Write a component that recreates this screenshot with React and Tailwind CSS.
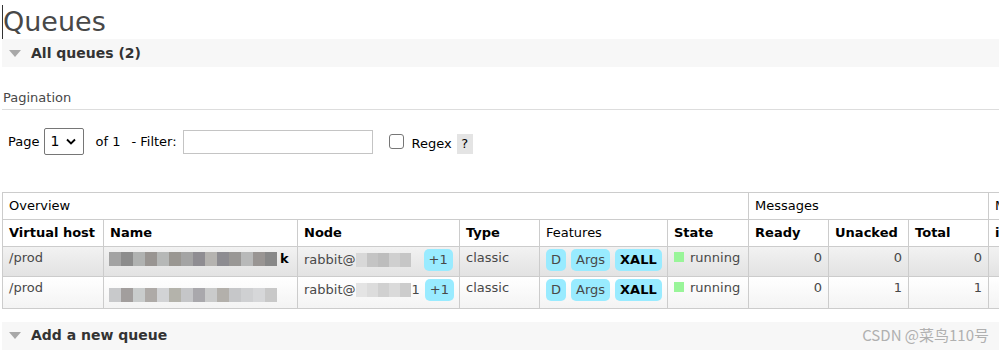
import React from 'react';

const font = { fontFamily: '"DejaVu Sans", Verdana, sans-serif' };

const Mosaic = ({ shades, w = 12, className = '' }) => (
    <span className={`inline-flex align-middle ${className}`}>
        {shades.map((c, i) => (
            <span key={i} className="inline-block h-[14px]" style={{ background: c, width: w }} />
        ))}
    </span>
);

const Badge = ({ children, bold }) => (
    <span className={`inline-block whitespace-nowrap rounded-[5px] bg-[#99ebff] px-[5px] leading-[22px] ${bold ? 'font-bold text-black' : 'text-[#484848]'}`}>
        {children}
    </span>
);

const rows = [
    {
        bg: 'bg-linear-to-b from-[#f2f2f2] to-[#e2e2e2]',
        name: ['#a3a3a3', '#8c8c8c', '#b0b2b1', '#999592', '#b6b8b7', '#9a9792', '#a4a4a4', '#8f8d92', '#b5b3b0', '#8d8c91', '#999795', '#b8b9b9', '#999593', '#888888'],
        tail: 'k',
        node: ['#d8d8d8', '#c4c4c4', '#bdbdbd', '#cfcfcf', '#c6c6c6'],
        nodeTail: '',
        ready: 0, unacked: 0, total: 0,
    },
    {
        bg: 'bg-linear-to-b from-[#ffffff] to-[#f3f3f3]',
        name: ['#c8c9cb', '#a29e9d', '#c9cccc', '#aeaaa7', '#d2d3d5', '#b4b3ab', '#c5c6c8', '#a9a8ac', '#cacbcb', '#b3b0ab', '#c6c7c9', '#cfd0d2', '#d6d7d9', '#c8c8c8'],
        tail: '',
        node: ['#e4e4e4', '#dcdcdc', '#d0d0d0', '#dadada', '#cccccc'],
        nodeTail: '1',
        ready: 0, unacked: 1, total: 1,
    },
];

const SectionBar = ({ title, children }) => (
    <div className="ml-[2px] h-[28px] bg-[#f7f7f7] flex items-center">
        <span className="ml-[7px] w-0 h-0 border-l-[6px] border-r-[6px] border-t-[7px] border-l-transparent border-r-transparent border-t-[#a8a8a8]" />
        <span className="ml-[10px] text-[14px] font-bold text-[#333]">{title}</span>
        {children}
    </div>
);

const App = () => {
    return (
        <div className="w-[999px] h-[351px] overflow-hidden bg-white text-[#484848]" style={font}>
            {/* Title */}
            <h1 className="ml-[2px] mt-[5px] h-[34px] border-l border-[#333] pl-[0px] text-[27px] leading-[34px] text-[#484848]">Queues</h1>

            <SectionBar title="All queues (2)" />

            {/* Pagination */}
            <div className="mt-[18px] ml-[2px] border-b border-[#ddd]">
                <span className="ml-[1px] text-[13px] leading-[17px] text-[#484848]">Pagination</span>
            </div>

            <div className="mt-[18px] ml-[8px] flex items-center h-[27px] text-[13px] text-black">
                <span>Page</span>
                <span className="ml-[5px] w-[40px] h-[27px] border border-[#767676] rounded-[2px] flex items-center justify-between px-[5px]">
                    <span className="text-[14px]">1</span>
                    <svg width="10" height="7" viewBox="0 0 10 7" className="mr-[2px]">
                        <path d="M1 1.5l4 4 4-4" fill="none" stroke="#000" strokeWidth="1.8" />
                    </svg>
                </span>
                <span className="ml-[11px]">of 1</span>
                <span className="ml-[11px]">- Filter:</span>
                <span className="ml-[6px] w-[190px] h-[24px] border border-[#c4c4c4] bg-white" />
                <span className="ml-[16px] w-[15px] h-[15px] border border-[#767676] rounded-[3px] bg-white" />
                <span className="ml-[8px] mt-[4px]">Regex</span>
                <span className="ml-[5px] mt-[4px] w-[16px] h-[20px] bg-[#e4e4e4] flex items-center justify-center text-[13px]">?</span>
            </div>

            {/* Table */}
            <div className="mt-[37px] ml-[2px] overflow-hidden">
                <table className="border-collapse text-[13px] table-fixed w-[1100px]">
                    <colgroup>
                        <col className="w-[101px]" />
                        <col className="w-[194px]" />
                        <col className="w-[162px]" />
                        <col className="w-[80px]" />
                        <col className="w-[128px]" />
                        <col className="w-[81px]" />
                        <col className="w-[80px]" />
                        <col className="w-[80px]" />
                        <col className="w-[80px]" />
                        <col className="w-[114px]" />
                    </colgroup>
                    <thead>
                        <tr className="h-[27px]">
                            <th colSpan={6} className="border border-[#ccc] text-left font-normal text-black px-[6px]">Overview</th>
                            <th colSpan={3} className="border border-[#ccc] text-left font-normal text-black px-[6px]">Messages</th>
                            <th className="border border-[#ccc] text-left font-normal text-black px-[6px] whitespace-nowrap">Message rates</th>
                        </tr>
                        <tr className="h-[27px] text-black">
                            <th className="border border-[#ccc] text-left px-[6px]">Virtual host</th>
                            <th className="border border-[#ccc] text-left px-[6px]">Name</th>
                            <th className="border border-[#ccc] text-left px-[6px]">Node</th>
                            <th className="border border-[#ccc] text-left px-[6px]">Type</th>
                            <th className="border border-[#ccc] text-left font-normal px-[6px]">Features</th>
                            <th className="border border-[#ccc] text-left px-[6px]">State</th>
                            <th className="border border-[#ccc] text-left px-[6px]">Ready</th>
                            <th className="border border-[#ccc] text-left px-[6px]">Unacked</th>
                            <th className="border border-[#ccc] text-left px-[6px]">Total</th>
                            <th className="border border-[#ccc] text-left px-[6px]">incoming</th>
                        </tr>
                    </thead>
                    <tbody>
                        {rows.map((r, i) => (
                            <tr key={i} className={`h-[30px] ${r.bg}`}>
                                <td className="border border-[#ccc] px-[6px] align-top pt-[1px]">/prod</td>
                                <td className="border border-[#ccc] px-[5px] align-top pt-[5px]">
                                    <span className="inline-flex items-center">
                                        <Mosaic shades={r.name} className={i === 1 ? 'mt-[6px]' : ''} />
                                        {r.tail && <span className="ml-[3px] font-bold text-black leading-[14px]">{r.tail}</span>}
                                    </span>
                                </td>
                                <td className="border border-[#ccc] px-[6px] align-top pt-[2px]">
                                    <span className="inline-flex items-center whitespace-nowrap">
                                        <span>rabbit@</span>
                                        <Mosaic shades={r.node} w={11} />
                                        {r.nodeTail && <span className="ml-[1px]">{r.nodeTail}</span>}
                                        <span className={r.nodeTail ? 'ml-[5px]' : 'ml-[13px]'}><Badge>+1</Badge></span>
                                    </span>
                                </td>
                                <td className="border border-[#ccc] px-[6px] align-top pt-[1px]">classic</td>
                                <td className="border border-[#ccc] px-[6px] align-top pt-[2px]">
                                    <span className="flex gap-[5px]">
                                        <Badge>D</Badge>
                                        <Badge>Args</Badge>
                                        <Badge bold>XALL</Badge>
                                    </span>
                                </td>
                                <td className="border border-[#ccc] px-[6px] align-top pt-[1px]">
                                    <span className="inline-block w-[10px] h-[10px] bg-[#99f599] mr-[6px]" />
                                    running
                                </td>
                                <td className="border border-[#ccc] px-[6px] align-top pt-[1px] text-right">{r.ready}</td>
                                <td className="border border-[#ccc] px-[6px] align-top pt-[1px] text-right">{r.unacked}</td>
                                <td className="border border-[#ccc] px-[6px] align-top pt-[1px] text-right">{r.total}</td>
                                <td className="border border-[#ccc] px-[6px] align-top pt-[1px]"></td>
                            </tr>
                        ))}
                    </tbody>
                </table>
            </div>

            <div className="mt-[13px]">
                <SectionBar title="Add a new queue">
                    <span className="ml-auto mr-[10px] text-[15px] text-[#b0b0b0]" style={{ fontFamily: '"Liberation Sans Narrow", "Noto Sans CJK SC", sans-serif' }}>
                        CSDN @菜鸟110号
                    </span>
                </SectionBar>
            </div>
        </div>
    );
};

export default App;
